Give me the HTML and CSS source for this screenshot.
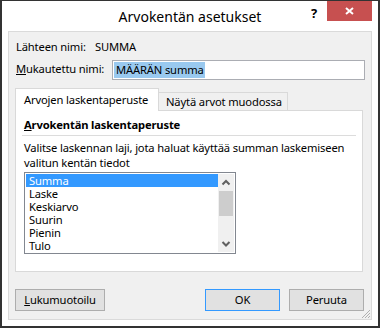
FILE: index.html
```html
<!DOCTYPE html>
<html lang="fi">
<head>
<meta charset="utf-8">
<title>Arvokentän asetukset</title>
<link rel="stylesheet" href="styles.css">
</head>
<body>
<div class="window">
  <div class="titlebar">
    <div class="title">Arvokentän asetukset</div>
    <div class="controls">
      <div class="help">?</div>
      <div class="close">
        <svg width="45" height="20" viewBox="0 0 45 20"><path d="M19 7 L26 13 M26 7 L19 13" stroke="#fff" stroke-width="2" fill="none"/></svg>
      </div>
    </div>
  </div>
  <div class="client">
    <div class="row source">
      <span class="label">Lähteen nimi:</span>
      <span class="value">SUMMA</span>
    </div>
    <div class="row custom">
      <span class="label"><u>M</u>ukautettu nimi:</span>
      <div class="input"><span class="sel">MÄÄRÄN summa</span></div>
    </div>
    <div class="tabs">
      <div class="tab active">Arvojen laskentaperuste</div>
      <div class="tab inactive">Näytä arvot muodossa</div>
    </div>
    <div class="tabpanel">
      <div class="group-title"><u>A</u>rvokentän laskentaperuste</div>
      <div class="separator"></div>
      <div class="desc">Valitse laskennan laji, jota haluat käyttää summan laskemiseen<br>valitun kentän tiedot</div>
      <div class="listbox">
        <div class="items">
          <div class="item selected">Summa</div>
          <div class="item">Laske</div>
          <div class="item">Keskiarvo</div>
          <div class="item">Suurin</div>
          <div class="item">Pienin</div>
          <div class="item">Tulo</div>
        </div>
        <div class="scrollbar">
          <div class="arrow">
            <svg width="16" height="17" viewBox="0 0 16 17"><path d="M4.5 10.5 L8 7 L11.5 10.5" stroke="#606060" stroke-width="2" fill="none"/></svg>
          </div>
          <div class="thumb"></div>
          <div class="track"></div>
          <div class="arrow">
            <svg width="16" height="17" viewBox="0 0 16 17"><path d="M4.5 7 L8 10.5 L11.5 7" stroke="#606060" stroke-width="2" fill="none"/></svg>
          </div>
        </div>
      </div>
    </div>
    <div class="buttons">
      <div class="btn wide"><u>L</u>ukumuotoilu</div>
      <div class="spacer"></div>
      <div class="btn default">OK</div>
      <div class="btn">Peruuta</div>
    </div>
    <svg class="grip" width="10" height="10" viewBox="0 0 10 10">
      <path d="M9 1 L1 9 M9 4 L4 9 M9 7 L7 9" stroke="#b0b0b0" stroke-width="1" fill="none"/>
    </svg>
  </div>
</div>
</body>
</html>
```

FILE: styles.css
```css
* {
  box-sizing: border-box;
}

html, body {
  margin: 0;
  padding: 0;
  background: #ffffff;
}

body {
  font-family: "Noto Sans", "Open Sans", sans-serif;
  font-size: 11.2px;
  letter-spacing: -0.15px;
  color: #000;
}

.window {
  width: 380px;
  height: 328px;
  border: 2px solid #333;
  border-top-width: 1px;
  background: #fff;
  display: flex;
  flex-direction: column;
}

.titlebar {
  height: 30px;
  display: grid;
  grid-template-columns: 1fr auto 1fr;
}

.title {
  grid-column: 2;
  font-size: 14px;
  letter-spacing: 0;
  line-height: 20px;
  padding-top: 6px;
  color: #000;
  white-space: nowrap;
}

.controls {
  grid-column: 3;
  display: flex;
  justify-content: flex-end;
  align-items: flex-start;
  padding-right: 6px;
}

.help {
  width: 26px;
  height: 20px;
  text-align: center;
  font-weight: bold;
  font-size: 13px;
  line-height: 20px;
  padding-top: 2px;
  color: #000;
}

.close {
  width: 45px;
  height: 20px;
  background: #c75050;
}

.close svg {
  display: block;
}

.client {
  position: relative;
  flex: 1;
  margin: 0 6px 6px 6px;
  background: #f0f0f0;
  border: 1px solid #dadada;
  padding: 0 6px 0 6px;
  display: flex;
  flex-direction: column;
}

.row {
  display: flex;
  align-items: flex-start;
  line-height: 15px;
  padding-left: 1px;
}

.row .label {
  white-space: nowrap;
}

.row.source {
  margin-top: 7px;
  height: 15px;
}

.row.source .label {
  width: 79px;
}

.row.custom {
  margin-top: 6px;
  height: 20px;
}

.row.custom .label {
  width: 96px;
  padding-top: 1px;
}

.input {
  flex: 1;
  height: 20px;
  background: #fff;
  border: 1px solid #abadb3;
  padding: 1px 0 0 1px;
  line-height: 16px;
}

.sel {
  background: #99c9ef;
  display: inline-block;
  padding: 0 1px 0 2px;
}

.tabs {
  margin-top: 8px;
  height: 22px;
  display: flex;
  align-items: flex-end;
  position: relative;
  z-index: 1;
}

.tab {
  border: 1px solid #d9d9d9;
  border-bottom: none;
  white-space: nowrap;
}

.tab.active {
  width: 144px;
  height: 23px;
  margin-bottom: -1px;
  background: #fff;
  line-height: 16px;
  padding: 3px 0 0 8px;
}

.tab.inactive {
  width: 129px;
  height: 18px;
  background: #f0f0f0;
  border-left: none;
  line-height: 16px;
  padding: 1px 0 0 7px;
}

.tabpanel {
  height: 162px;
  margin-right: 2px;
  background: #fff;
  border: 1px solid #d9d9d9;
  padding: 6px 6px 0 8px;
  display: flex;
  flex-direction: column;
}

.group-title {
  font-weight: bold;
  line-height: 15px;
}

.separator {
  margin-top: 3px;
  height: 1px;
  background: #dcdcdc;
  margin-left: -2px;
}

.desc {
  margin-top: 4px;
  line-height: 15px;
  white-space: nowrap;
}

.listbox {
  margin-top: 2px;
  width: 212px;
  height: 82px;
  border: 1px solid #828790;
  padding: 1px;
  display: flex;
  background: #fff;
}

.items {
  flex: 1;
}

.item {
  height: 13px;
  line-height: 13px;
  padding-left: 3px;
}

.item.selected {
  background: #3399ff;
  color: #fff;
}

.scrollbar {
  width: 16px;
  background: #f0f0f0;
  display: flex;
  flex-direction: column;
}

.arrow {
  height: 17px;
}

.arrow svg {
  display: block;
}

.thumb {
  height: 25px;
  margin: 0 1px;
  background: #cdcdcd;
}

.track {
  flex: 1;
}

.buttons {
  margin-top: 17px;
  margin-right: 1px;
  height: 22px;
  display: flex;
}

.spacer {
  flex: 1;
}

.btn {
  width: 75px;
  height: 22px;
  background: #e1e1e1;
  border: 1px solid #adadad;
  text-align: center;
  line-height: 20px;
}

.btn.wide {
  width: 90px;
}

.btn.default {
  border-color: #3399ff;
  margin-right: 9px;
}

.grip {
  position: absolute;
  right: 0;
  bottom: 0;
}
```
